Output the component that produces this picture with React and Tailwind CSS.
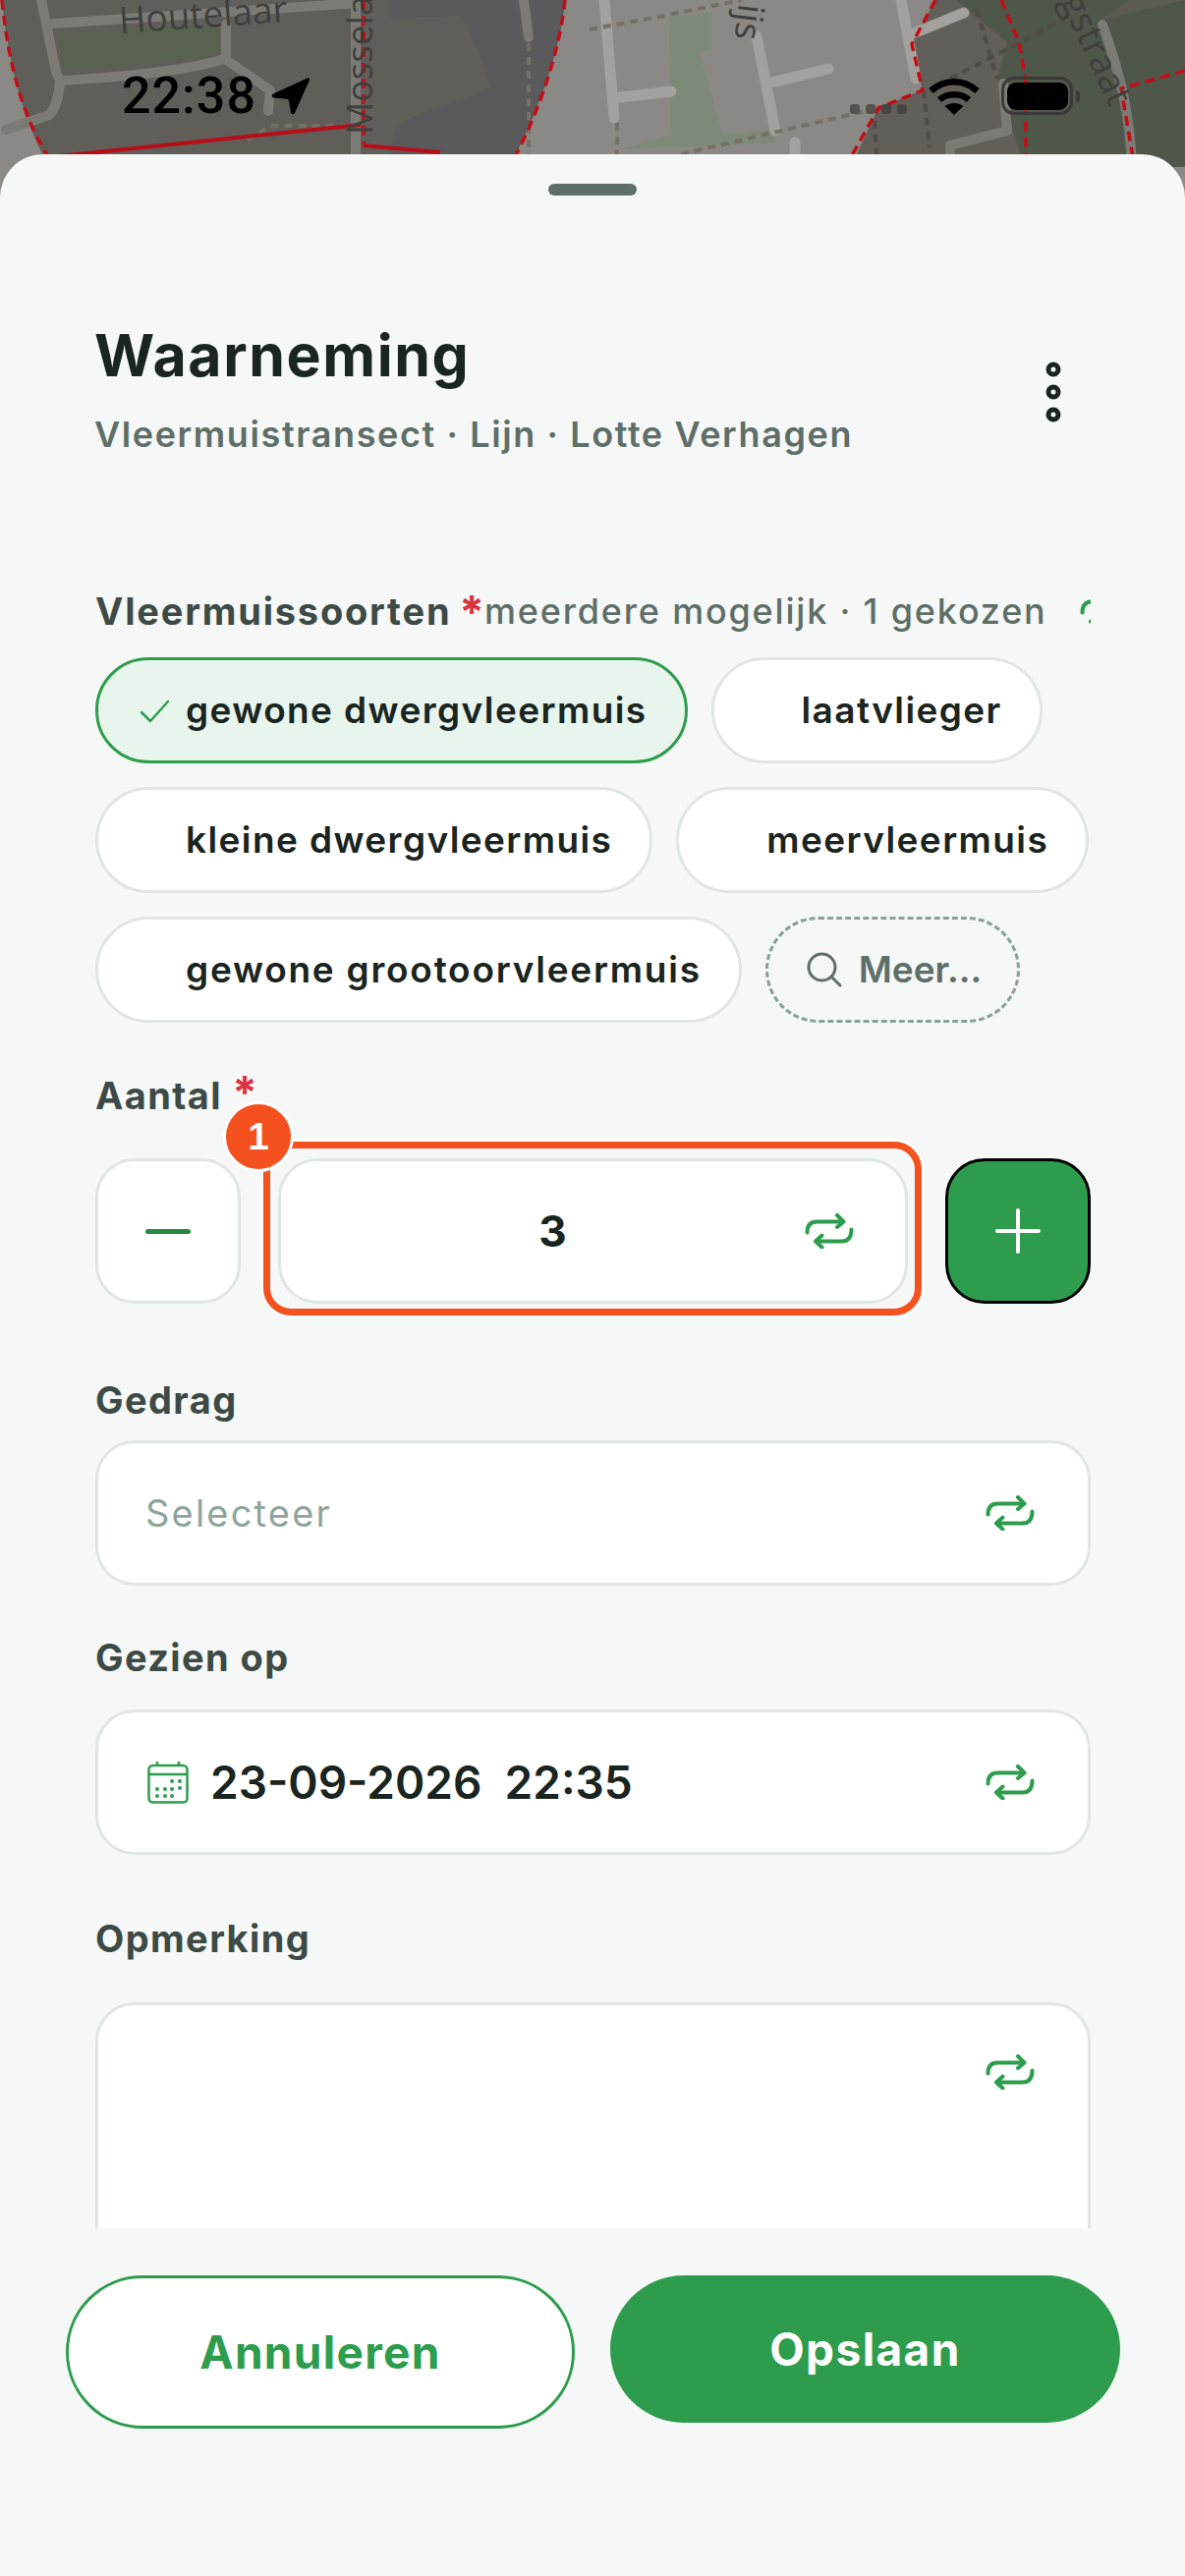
import React from "react";

const F = { fontFamily: "Inter, 'Noto Sans', sans-serif" };

function RepeatIcon({ className = "" }) {
  return (
    <svg className={`shrink-0 ${className}`} width="50" height="36" viewBox="0 0 50 36" fill="none" stroke="#2d9d4d" strokeWidth="4" strokeLinecap="round" strokeLinejoin="round">
      <path d="M2.5 19.5c0-7 3-11 10-11H38" />
      <path d="M33 2l6.5 6.5L33 14" />
      <path d="M47.5 16.5c0 8-3 12-10 12H11.5" />
      <path d="M17.5 22.5l-6.500 6 6.500 6" />
    </svg>
  );
}

function MapBackdrop() {
  return (
    <svg className="absolute left-0 top-0" width="1206" height="210" viewBox="0 0 1206 210">
      <rect width="1206" height="210" fill="#8b8985" />
      <path d="M2 0C8 60 22 120 50 170H518C550 110 570 50 575 0Z" fill="#5f5e59" />
      <path d="M395 18L470 16L490 60L500 90L405 125L392 170H518C550 110 570 50 575 0H395Z" fill="#5a595c" />
      <path d="M952 0L928 45L939 92L894 110L866 170H1206V0Z" fill="#4f564a" />
      <path d="M952 0L928 45L939 92L894 110L866 170H1042L1015 80L1025 43L973 0Z" fill="#625f5b" />
      <path d="M1122 20L1206 0H1150Z" fill="#5a5c53" />
      <path d="M681 17L724 13V50L712 53L735 137L785 132L790 145L631 152L682 138Z" fill="#7e8a79" />
      <path d="M58 34L222 25L224 52C200 62 120 68 65 70Z" fill="#596150" />
      <g fill="none" stroke="#7b7a75" strokeWidth="10" strokeLinecap="round" strokeLinejoin="round">
        <path d="M42 0L57 73L61 83C60 100 55 112 50 117L6 132" />
        <path d="M54 24L367 3" />
        <path d="M63 82C130 78 190 72 229 60L275 92L273 113" />
        <path d="M230 25V60" />
        <path d="M362 0V170" />
        <path d="M533 0L538 38" />
      </g>
      <g fill="none" stroke="#a3a19d" strokeWidth="11" strokeLinecap="round" strokeLinejoin="round">
        <path d="M615 0L625 120" />
        <path d="M631 99L683 93" />
        <path d="M770 37L789 133" />
        <path d="M785 84L843 70" />
        <path d="M809 145V170" />
        <path d="M917 0L932 80" />
        <path d="M932 33L981 13" />
      </g>
      <g fill="none" stroke="#7b7a75" strokeWidth="10" strokeLinecap="round" strokeLinejoin="round">
        <path d="M1021 85L1025 133L967 148V170" />
        <path d="M1122 25C1142 80 1150 120 1152 170" />
      </g>
      <g fill="none" stroke="#766f66" strokeWidth="4" strokeDasharray="8 6">
        <path d="M600 30L666 18L755 0" />
        <path d="M693 157L894 110" />
        <path d="M538 44V170" />
        <path d="M252 143L275 128H360" />
        <path d="M628 125V160" />
      </g>
      <g fill="none" stroke="#4f4b45" strokeWidth="4" strokeDasharray="8 6">
        <path d="M967 80L1083 20" />
        <path d="M994 10L1015 80" />
        <path d="M940 92L946 150" />
        <path d="M890 123L892 157" />
      </g>
      <g fill="none" stroke="#c40d17" strokeWidth="3.500" strokeDasharray="10 6">
        <path d="M2 0C8 60 22 120 50 160" />
        <path d="M575 0C570 50 550 110 524 160" />
        <path d="M370 0V146" />
        <path d="M952 0L928 45L939 92L894 110L866 160" />
        <path d="M1019 0L1037 43L1044 83V160" />
        <path d="M1206 72L1141 90L1153 160" />
      </g>
      <g stroke="#b80d16" strokeWidth="4" fill="none">
        <path d="M50 160L367 127" />
        <path d="M369 148L448 155" />
      </g>
      <g fill="#3f3f3e" fontSize="37" style={{ fontFamily: "'Open Sans', sans-serif" }}>
        <text transform="translate(122 34) rotate(-4)">Houtelaar</text>
        <text transform="translate(379 137) rotate(-90)">Mossela</text>
        <text transform="translate(752 3) rotate(97)">ijs</text>
        <text transform="translate(1079 1) rotate(65)">gstraat</text>
      </g>
    </svg>
  );
}

function StatusBar() {
  return (
    <div className="absolute left-0 top-0 h-[157px] w-[1206px]">
      <span className="absolute left-[124px] top-[68px] text-[52px] leading-[60px] font-medium tracking-[1px] text-black" style={{ fontFamily: "Roboto, sans-serif" }}>22:38</span>
      <svg className="absolute left-[276px] top-[78px]" width="40" height="40" viewBox="0 0 40 40" fill="#000">
        <path d="M37 1.500C38.500 1 39.500 2 39 3.500L24 37C23 39 20.500 38.500 20 36.500L18 24.500C17.800 23.500 17 23 16 22.800L2.500 21.500C0.500 21 0 18.500 2 17.500Z" />
      </svg>
      <div className="absolute left-[865px] top-[106px] flex gap-[6px]">
        <div className="h-[10px] w-[10px] rounded-[3px] bg-[#555350]" />
        <div className="h-[10px] w-[10px] rounded-[3px] bg-[#555350]" />
        <div className="h-[10px] w-[10px] rounded-[3px] bg-[#474542]" />
        <div className="h-[10px] w-[10px] rounded-[3px] bg-[#474542]" />
      </div>
      <svg className="absolute left-[945px] top-[78px]" width="52" height="40" viewBox="0 0 52 40" fill="none" stroke="#000" strokeWidth="6.500">
        <path d="M2.500 14.500C16 2 36 2 49.500 14.500" />
        <path d="M11 23.500C19 16.500 33 16.500 41 23.500" />
        <path d="M26 39L16.500 30C22 26 30 26 35.500 30Z" fill="#000" stroke="none" />
      </svg>
      <div className="absolute left-[1019px] top-[78px] flex h-[39px] w-[73px] items-center justify-center rounded-[13px] border-[3px] border-[#3a3a38]">
        <div className="h-[28px] w-[62px] rounded-[9px] bg-black" />
      </div>
      <div className="absolute left-[1095px] top-[92px] h-[12px] w-[4px] rounded-r-full bg-[#3a3a38]" />
    </div>
  );
}

function Chip({ label, selected, wide }) {
  return (
    <div className={`relative flex h-[108px] items-center rounded-full border-[3px] pl-[89px] pr-[38px] ${selected ? "border-[#2d9d4d] bg-[#e8f5ed]" : "border-[#dfe6e3] bg-white"}`}>
      {selected && (
        <svg className="absolute left-[41px] top-[39px]" width="32" height="26" viewBox="0 0 32 26" fill="none" stroke="#2d9d4d" strokeWidth="2.500" strokeLinecap="round" strokeLinejoin="round">
          <path d="M3 14l9 9L30 3" />
        </svg>
      )}
      <span className={`text-[37px] font-semibold leading-[44px] text-[#1a2420] ${wide ? "tracking-[1.75px]" : "tracking-[1.4px]"}`}>{label}</span>
    </div>
  );
}

function Label({ children, className = "" }) {
  return <div className={`h-[48px] text-[38px] font-bold leading-[48px] tracking-[1.4px] text-[#3e4a45] ${className}`}>{children}</div>;
}

export default function App() {
  return (
    <div className="relative h-[2622px] w-[1206px] overflow-hidden bg-[#8b8985]" style={F}>
      <MapBackdrop />
      <StatusBar />
      <div className="relative mt-[157px] flex h-[2465px] flex-col overflow-hidden rounded-t-[44px] bg-[#f5f8f7]">
        <div className="mx-auto mt-[30px] h-[12px] w-[90px] rounded-full bg-[#5f6e67]" />

        <header className="mt-[127px] flex items-center justify-between pl-[96px] pr-[126px]">
          <div>
            <h1 className="text-[59px] font-bold leading-[72px] tracking-[1.6px] text-[#1a2420]">Waarneming</h1>
            <p className="mt-[22px] text-[36px] font-semibold leading-[44px] tracking-[1.6px] text-[#5f6e67]">Vleermuistransect · Lijn · Lotte Verhagen</p>
          </div>
          <svg className="mt-[8px]" width="16" height="62" viewBox="0 0 16 62" fill="none" stroke="#1a2420" strokeWidth="5">
            <circle cx="8" cy="8" r="5" />
            <circle cx="8" cy="31" r="5" />
            <circle cx="8" cy="54" r="5" />
          </svg>
        </header>

        <div className="ml-[97px] mt-[134px] h-[1670px] w-[1013px] overflow-hidden">
          <div className="flex h-[48px] items-center whitespace-nowrap">
            <span className="text-[38px] font-bold leading-[48px] tracking-[1.8px] text-[#3e4a45]">Vleermuissoorten</span>
            <span className="ml-[8px] h-[48px] text-[46px] font-bold leading-[50px] text-[#d9343f]">*</span>
            <span className="text-[36px] font-medium leading-[48px] tracking-[1.8px] text-[#5f6e67]">meerdere mogelijk · 1 gekozen</span>
            <RepeatIcon className="ml-[33px]" />
          </div>

          <div className="mt-[23px] flex flex-wrap gap-x-[24px] gap-y-[24px]">
            <Chip label="gewone dwergvleermuis" selected />
            <Chip label="laatvlieger" />
            <Chip label="kleine dwergvleermuis" />
            <Chip label="meervleermuis" />
            <Chip label="gewone grootoorvleermuis" wide />
            <div className="flex h-[108px] items-center gap-[17px] rounded-full border-[3px] border-dashed border-[#8aa097] pl-[39px] pr-[36px]">
              <svg width="36" height="36" viewBox="0 0 36 36" fill="none" stroke="#5f6e67" strokeWidth="3" strokeLinecap="round">
                <circle cx="15.500" cy="15.500" r="13.500" />
                <path d="M25.500 25.500L34 34" />
              </svg>
              <span className="text-[37px] font-semibold leading-[44px] text-[#5f6e67]">Meer...</span>
            </div>
          </div>

          <Label className="mt-[49px]">
            Aantal <span className="text-[46px] leading-[44px] text-[#d9343f]">*</span>
          </Label>

          <div className="mt-[41px] flex h-[148px] items-stretch gap-[38px]">
            <div className="flex w-[148px] items-center justify-center rounded-[40px] border-[3px] border-[#dfe6e3] bg-white">
              <div className="h-[5px] w-[46px] rounded-full bg-[#258a3e]" />
            </div>
            <div className="relative flex w-[641px] items-center rounded-[40px] border-[3px] border-[#dfe6e3] bg-white">
              <div className="absolute left-[-18px] right-[-17px] top-[-20px] bottom-[-15px] rounded-[28px] border-[7px] border-[#f4511e] shadow-[0_0_0_3px_#ffffff]" />
              <div className="absolute left-[-59px] top-[-61px] flex h-[72px] w-[72px] items-center justify-center rounded-full border-[3px] border-white bg-[#f4511e]">
                <span className="text-[38px] font-bold leading-none text-white" style={{ fontFamily: "'Liberation Sans', sans-serif" }}>1</span>
              </div>
              <span className="flex-1 pl-[16px] text-center text-[44px] font-bold leading-[48px] text-[#1a2420]">3</span>
              <RepeatIcon className="mr-[52px] ml-[-4px]" />
            </div>
            <div className="flex w-[148px] items-center justify-center rounded-[40px] border-[3px] border-black bg-[#2d9d4d]">
              <svg width="48" height="48" viewBox="0 0 48 48" fill="none" stroke="#fff" strokeWidth="4" strokeLinecap="round">
                <path d="M24 3V45M3 24H45" />
              </svg>
            </div>
          </div>

          <Label className="mt-[74px]">Gedrag</Label>
          <div className="mt-[17px] flex h-[148px] items-center justify-between rounded-[40px] border-[3px] border-[#dfe6e3] bg-white pl-[48px] pr-[54px]">
            <span className="text-[38px] leading-[48px] tracking-[2.2px] text-[#8fa59a]">Selecteer</span>
            <RepeatIcon />
          </div>

          <Label className="mt-[49px]">Gezien op</Label>
          <div className="mt-[29px] flex h-[148px] items-center justify-between rounded-[40px] border-[3px] border-[#dfe6e3] bg-white pl-[50px] pr-[54px]">
            <div className="flex items-center gap-[22px]">
              <svg width="42" height="44" viewBox="0 0 42 44" fill="none" stroke="#2d9d4d" strokeWidth="2.500">
                <rect x="1.500" y="5" width="39" height="37.500" rx="4" />
                <path d="M1.500 14H40.500M10 1V5M32 1V5" />
                <g fill="#2d9d4d" stroke="none">
                  <circle cx="25" cy="21" r="2" /><circle cx="33" cy="21" r="2" />
                  <circle cx="10" cy="29" r="2" /><circle cx="18" cy="29" r="2" /><circle cx="25" cy="29" r="2" /><circle cx="33" cy="28" r="2" />
                  <circle cx="10" cy="36" r="2" /><circle cx="18" cy="36" r="2" /><circle cx="25" cy="36" r="2" />
                </g>
              </svg>
              <span className="whitespace-pre text-[46px] font-semibold leading-[56px] text-[#1a2420]">{"23-09-2026  22:35"}</span>
            </div>
            <RepeatIcon />
          </div>

          <Label className="mt-[61px]">Opmerking</Label>
          <div className="mt-[41px] flex h-[300px] items-start justify-end rounded-[40px] border-[3px] border-[#dfe6e3] bg-white pr-[54px] pt-[50px]">
            <RepeatIcon />
          </div>
        </div>

        <footer className="ml-[67px] mt-[48px] flex w-[1073px] items-start gap-[36px]">
          <div className="flex h-[156px] w-[518px] items-center justify-center rounded-[78px] border-[3px] border-[#2d9d4d] bg-white">
            <span className="text-[46px] font-bold leading-[56px] tracking-[1.3px] text-[#2d9d4d]">Annuleren</span>
          </div>
          <div className="flex h-[150px] w-[519px] items-center justify-center rounded-[75px] bg-[#2d9d4d]">
            <span className="text-[46px] font-bold leading-[56px] tracking-[1.4px] text-white">Opslaan</span>
          </div>
        </footer>
      </div>
    </div>
  );
}
